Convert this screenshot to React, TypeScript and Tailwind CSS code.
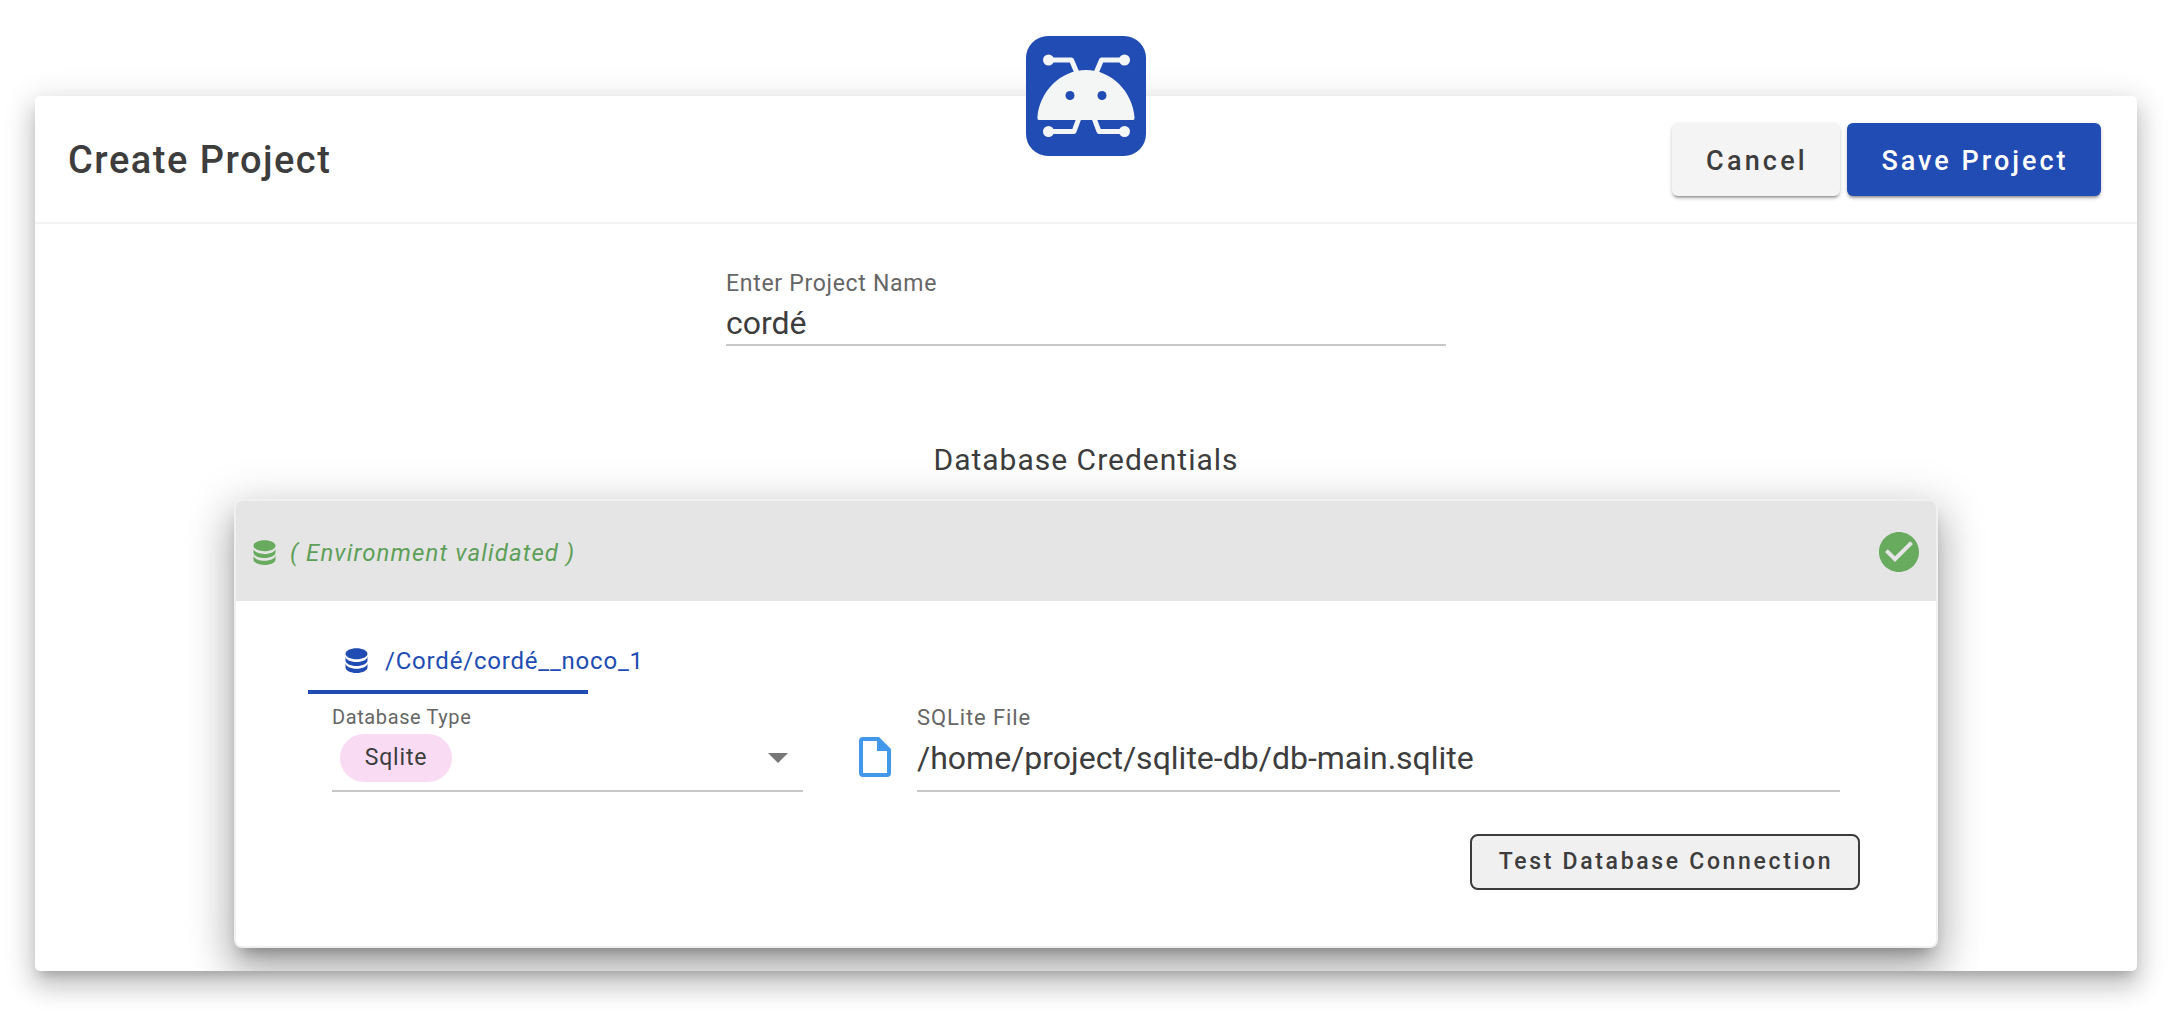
import React from "react";

const DB = "M12,3C7.58,3 4,4.79 4,7C4,9.21 7.58,11 12,11C16.42,11 20,9.21 20,7C20,4.79 16.42,3 12,3M4,9V12C4,14.21 7.58,16 12,16C16.42,16 20,14.21 20,12V9C20,11.21 16.42,13 12,13C7.58,13 4,11.21 4,9M4,14V17C4,19.21 7.58,21 12,21C16.42,21 20,19.21 20,17V14C20,16.21 16.42,18 12,18C7.58,18 4,16.21 4,14Z";

function Mdi({ d, className }: { d: string; className: string }) {
  return (
    <svg viewBox="0 0 24 24" className={className} fill="currentColor">
      <path d={d} />
    </svg>
  );
}

function Logo() {
  return (
    <svg viewBox="0 0 120 120" className="absolute left-[1026px] top-[36px] w-[120px] h-[120px] z-10">
      <rect width="120" height="120" rx="22" fill="#214cb3" />
      <g fill="none" stroke="#f4f6f6" strokeWidth="5" strokeLinejoin="round">
        <path d="M22 24H45.5L51 37" />
        <path d="M99 24H75.5L70 37" />
        <path d="M22 95.5H48L53 82" />
        <path d="M99 95.5H73L68 82" />
      </g>
      <g fill="#f4f6f6">
        <circle cx="22.5" cy="24" r="5.5" />
        <circle cx="98.5" cy="24" r="5.5" />
        <circle cx="22.5" cy="95.5" r="5.5" />
        <circle cx="98.5" cy="95.5" r="5.5" />
        <path d="M13 84Q11.2 84 11.4 81.5C13.5 55 35 34 60 34C85 34 106.500 55 108.600 81.500Q108.800 84 107 84Z" />
      </g>
      <circle cx="44" cy="59.500" r="4.500" fill="#214cb3" />
      <circle cx="76" cy="59.500" r="4.500" fill="#214cb3" />
    </svg>
  );
}

export default function App() {
  return (
    <div
      className="relative h-screen overflow-hidden bg-white pt-[96px] px-[35px] text-[#3d3d3d]"
      style={{ fontFamily: "Roboto, sans-serif" }}
    >
      <Logo />
      <div className="h-[875px] w-[2102px] overflow-hidden rounded-[5px] bg-white shadow-[0_8px_10px_-5px_rgba(0,0,0,0.2),0_16px_24px_2px_rgba(0,0,0,0.14),0_6px_30px_5px_rgba(0,0,0,0.12)]">
        <header className="flex h-[128px] items-center justify-between border-b-2 border-[#f3f3f3] pl-[33px] pr-[36px]">
          <h1 className="pt-[3px] text-[38px] font-medium tracking-[1.5px]">Create Project</h1>
          <div className="flex gap-[7px]">
            <button className="h-[73px] w-[168px] rounded-[6px] bg-[#f4f4f4] pl-[2px] pt-[5px] text-[27px] font-medium tracking-[3.2px] shadow-[0_3px_3px_-2px_rgba(0,0,0,0.4),0_2px_4px_0_rgba(0,0,0,0.2)]">
              Cancel
            </button>
            <button className="h-[73px] w-[254px] rounded-[6px] bg-[#214cb3] pl-[2px] pt-[5px] text-[27px] font-medium tracking-[3px] text-white shadow-[0_3px_3px_-2px_rgba(0,0,0,0.4),0_2px_4px_0_rgba(0,0,0,0.2)]">
              Save Project
            </button>
          </div>
        </header>
        <main className="flex flex-col items-center">
          <div className="mt-[45px] w-[720px]">
            <div className="text-[23px] leading-[30px] tracking-[0.7px] text-[#666]">Enter Project Name</div>
            <div className="h-[47px] border-b-2 border-[#c8c8c8] text-[32px] leading-[49px]">cordé</div>
          </div>
          <h2 className="mt-[94px] text-[30px] leading-[40px] tracking-[1px]">Database Credentials</h2>
          <section className="mt-[19px] w-[1704px] rounded-[8px] border-2 border-[#f0f0f0] bg-white shadow-[0_11px_15px_-7px_rgba(0,0,0,0.3),0_24px_38px_3px_rgba(0,0,0,0.2),0_9px_46px_8px_rgba(0,0,0,0.14)]">
            <div className="flex h-[100px] items-center justify-between rounded-t-[6px] bg-[#e5e5e5] pl-[12px] pr-[13px] pt-[2px]">
              <div className="flex items-center gap-[9px] text-[#5e9f58]">
                <Mdi d={DB} className="h-[33px] w-[33px] text-[#68ab5f]" />
                <span className="pt-[2px] text-[24px] italic tracking-[1.1px]">( Environment validated )</span>
              </div>
              <Mdi
                d="M12 2C6.500 2 2 6.500 2 12S6.500 22 12 22 22 17.500 22 12 17.500 2 12 2M10 17L5 12L6.410 10.590L10 14.170L17.590 6.580L19 8L10 17Z"
                className="h-[48px] w-[48px] text-[#68ab5f]"
              />
            </div>
            <div className="h-[345px] pl-[72px] pr-[96px] pt-[33px]">
              <div className="flex h-[60px] w-[280px] items-start gap-[12px] border-b-4 border-[#214cb3] pl-[32px] pt-[10px] text-[#214cb3]">
                <Mdi d={DB} className="h-[33px] w-[33px] shrink-0" />
                <span className="text-[24px] leading-[34px] tracking-[0.8px]">/Cordé/cordé__noco_1</span>
              </div>
              <div className="mt-[9px] flex items-end pl-[24px]">
                <div className="w-[471px] border-b-2 border-[#c8c8c8]">
                  <div className="text-[20px] leading-[28px] tracking-[0.6px] text-[#666]">Database Type</div>
                  <div className="mb-[7.5px] mt-[3px] flex items-center justify-between pl-[8px] pr-[15px]">
                    <span className="flex h-[48px] w-[112px] items-center justify-center rounded-full bg-[#f9dcf3] text-[23px] tracking-[0.8px]">Sqlite</span>
                    <span className="h-0 w-0 border-x-[10px] border-t-[10px] border-x-transparent border-t-[#777]" />
                  </div>
                </div>
                <Mdi
                  d="M14,2H6A2,2 0 0,0 4,4V20A2,2 0 0,0 6,22H18A2,2 0 0,0 20,20V8L14,2M18,20H6V4H13V9H18V20Z"
                  className="mb-[11px] ml-[48px] h-[48px] w-[48px] text-[#4299ec]"
                />
                <div className="ml-[18px] flex-1 border-b-2 border-[#c8c8c8]">
                  <div className="text-[22px] leading-[28px] tracking-[0.9px] text-[#666]">SQLite File</div>
                  <div className="mb-[10px] mt-[4px] text-[32px] leading-[44px]">/home/project/sqlite-db/db-main.sqlite</div>
                </div>
              </div>
              <div className="mt-[42px] flex justify-end">
                <button className="-mr-[20px] h-[56px] w-[390px] rounded-[8px] border-2 border-[#3b3b3b] bg-[#f0f0f0] pl-[2px] pt-[2px] text-[23px] font-medium tracking-[2.67px]">
                  Test Database Connection
                </button>
              </div>
            </div>
          </section>
        </main>
      </div>
    </div>
  );
}
